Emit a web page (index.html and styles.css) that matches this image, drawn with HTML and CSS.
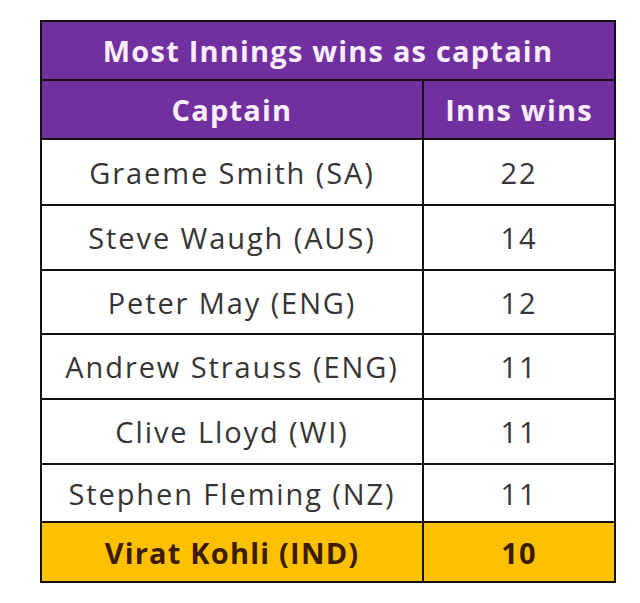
FILE: index.html
```html
<!DOCTYPE html>
<html>
<head>
<meta charset="utf-8">
<link rel="stylesheet" href="styles.css">
</head>
<body>
<div class="page">
  <table class="stats">
    <colgroup><col class="c1"><col class="c2"></colgroup>
    <tr class="title-row"><th colspan="2">Most Innings wins as captain</th></tr>
    <tr class="head-row"><th>Captain</th><th>Inns wins</th></tr>
    <tr class="row r1"><td>Graeme Smith (SA)</td><td>22</td></tr>
    <tr class="row r2"><td>Steve Waugh (AUS)</td><td>14</td></tr>
    <tr class="row r3"><td>Peter May (ENG)</td><td>12</td></tr>
    <tr class="row r4"><td>Andrew Strauss (ENG)</td><td>11</td></tr>
    <tr class="row r5"><td>Clive Lloyd (WI)</td><td>11</td></tr>
    <tr class="row r6"><td>Stephen Fleming (NZ)</td><td>11</td></tr>
    <tr class="hl-row"><td>Virat Kohli (IND)</td><td>10</td></tr>
  </table>
</div>
</body>
</html>
```
FILE: styles.css
```css
html, body {
  margin: 0;
  padding: 0;
  background: #ffffff;
}
.page {
  padding: 20px 0 0 40px;
}
.stats {
  border-collapse: collapse;
  width: 574px;
  font-family: "Open Sans", "Liberation Sans", sans-serif;
  font-size: 29px;
  letter-spacing: 1.2px;
  table-layout: fixed;
}
.c1 { width: 382px; }
.c2 { width: 192px; }
.stats th, .stats td {
  border: 2px solid #111111;
  text-align: center;
  padding: 0;
}
.stats th {
  background: #7030a0;
  color: #fbeefb;
  font-weight: 700;
}
.title-row { height: 59px; }
.head-row { height: 59px; }
.row td {
  color: #363636;
  background: #ffffff;
  letter-spacing: 1.9px;
}
.r1 { height: 66px; }
.r2 { height: 65px; }
.r3 { height: 64px; }
.r4 { height: 65px; }
.r5 { height: 65px; }
.r6 { height: 58px; }
.hl-row { height: 60px; }
.hl-row td {
  background: #ffc000;
  color: #3b1c00;
  font-weight: 700;
}
```
